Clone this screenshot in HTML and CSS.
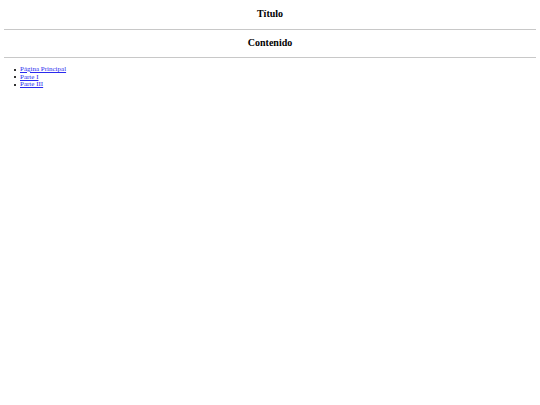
FILE: index.html
```html
<!DOCTYPE html>
<html lang="es">
<head>
    <meta charset="UTF-8">
    <meta name="viewport" content="width=device-width, initial-scale=1.0">
    <title>Título</title>
    <link rel="stylesheet" href="styles.css">
</head>
<body>
    <header class="page-title">
        <h1>Título</h1>
    </header>
    <hr>
    <h2 class="section-title">Contenido</h2>
    <hr>
    <ul class="menu">
        <li><a href="#">Página Principal</a></li>
        <li><a href="#">Parte I</a></li>
        <li><a href="#">Parte III</a></li>
    </ul>
</body>
</html>
```

FILE: styles.css
```css
body {
    font-family: "Liberation Serif", "Times New Roman", serif;
    font-size: 7px;
    margin: 4px;
    color: #000;
}
h1, h2 {
    font-size: 10px;
    line-height: 12px;
    font-weight: bold;
    text-align: center;
    margin: 0;
}
.page-title h1 {
    padding: 4px 0 9px;
}
.section-title {
    padding: 7px 0 8px;
}
hr {
    border: none;
    border-top: 1px solid #c8c8c8;
    margin: 0;
}
.menu {
    list-style: none;
    margin: 8px 0 0;
    padding-left: 10px;
    line-height: 7.5px;
}
.menu li {
    display: flex;
    align-items: center;
}
.menu li::before {
    content: "";
    width: 2px;
    height: 2px;
    background: #333;
    margin: 0 4px 0 0;
}
.menu a {
    color: #2a2aee;
}
```
